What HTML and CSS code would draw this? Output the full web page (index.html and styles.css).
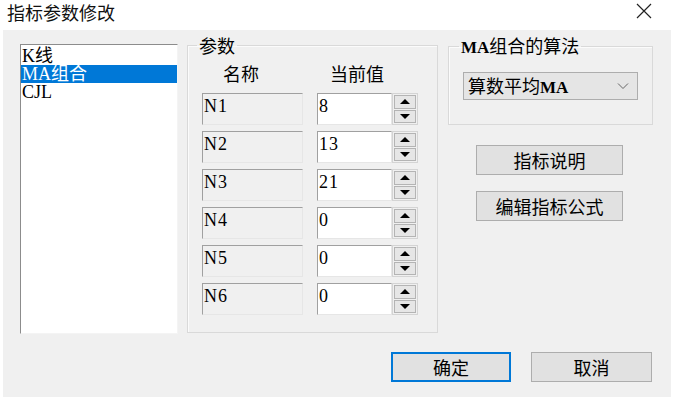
FILE: index.html
```html
<!DOCTYPE html>
<html lang="zh-CN">
  <head>
    <meta charset="UTF-8" />
    <meta name="viewport" content="width=device-width, initial-scale=1.0" />
    <title>指标参数修改</title>
    <link rel="stylesheet" href="styles.css">
  </head>
  <body>
    <div class="titlebar">
      <span class="titlebar__text">指标参数修改</span>
      <svg class="titlebar__close" width="16" height="16" viewBox="0 0 16 16">
        <path d="M1 1L15 15M15 1L1 15" stroke="#222" stroke-width="1.2" fill="none" />
      </svg>
    </div>

    <div class="dialog">
      <div class="dialog-main">
        <ul class="list">
          <li>K线</li>
          <li class="is-selected">MA组合</li>
          <li>CJL</li>
        </ul>

        <fieldset class="group group--params">
          <legend>参数</legend>
          <div class="params-head">
            <span class="params-head__name">名称</span>
            <span class="params-head__value">当前值</span>
          </div>
          <div class="params-rows">
            <div class="param">
              <div class="param__name">N1</div>
              <div class="param__value">8</div>
              <div class="spin"><span class="spin__up"></span><span class="spin__down"></span></div>
            </div>
            <div class="param">
              <div class="param__name">N2</div>
              <div class="param__value">13</div>
              <div class="spin"><span class="spin__up"></span><span class="spin__down"></span></div>
            </div>
            <div class="param">
              <div class="param__name">N3</div>
              <div class="param__value">21</div>
              <div class="spin"><span class="spin__up"></span><span class="spin__down"></span></div>
            </div>
            <div class="param">
              <div class="param__name">N4</div>
              <div class="param__value">0</div>
              <div class="spin"><span class="spin__up"></span><span class="spin__down"></span></div>
            </div>
            <div class="param">
              <div class="param__name">N5</div>
              <div class="param__value">0</div>
              <div class="spin"><span class="spin__up"></span><span class="spin__down"></span></div>
            </div>
            <div class="param">
              <div class="param__name">N6</div>
              <div class="param__value">0</div>
              <div class="spin"><span class="spin__up"></span><span class="spin__down"></span></div>
            </div>
          </div>
        </fieldset>

        <div class="side">
          <fieldset class="group group--algo">
            <legend><span class="latin">MA</span>组合的算法</legend>
            <div class="select">
              <span>算数平均<span class="latin">MA</span></span>
              <svg width="12" height="8" viewBox="0 0 12 8">
                <path d="M1 1.5L6 6.5L11 1.5" stroke="#666" stroke-width="1" fill="none" />
              </svg>
            </div>
          </fieldset>
          <button type="button" class="btn btn--side">指标说明</button>
          <button type="button" class="btn btn--side">编辑指标公式</button>
        </div>
      </div>

      <div class="dialog-actions">
        <button type="button" class="btn btn--primary">确定</button>
        <button type="button" class="btn">取消</button>
      </div>
    </div>
  </body>
</html>
```

FILE: styles.css
```css
* {
  box-sizing: border-box;
}

body {
  margin: 0;
  width: 680px;
  height: 405px;
  background-color: #fff;
  font-family: "Noto Sans CJK SC", sans-serif;
  color: #000;
  overflow: hidden;
}

ul {
  margin: 0;
  padding: 0;
  list-style: none;
}

.latin {
  font-family: "Liberation Serif", serif;
  font-weight: bold;
  font-size: 17px;
}

.titlebar {
  display: flex;
  justify-content: space-between;
  align-items: flex-start;
  height: 30px;
  padding: 0 28px 0 7px;
}

.titlebar__text {
  font-size: 18px;
  line-height: 24px;
  color: #111;
}

.titlebar__close {
  margin-top: 3px;
}

.dialog {
  display: flex;
  flex-direction: column;
  width: 668px;
  height: 367px;
  margin-left: 3px;
  padding: 5px 0 0 17px;
  background-color: #f0f0f0;
}

.dialog-main {
  display: flex;
  align-items: flex-start;
}

.list {
  width: 158px;
  height: 290px;
  margin-top: 9px;
  padding-top: 2px;
  background-color: #fff;
  border: 1px solid;
  border-color: #8c8c8c #f4f4f4 #f4f4f4 #8c8c8c;
  font-family: "Liberation Serif", "Noto Sans CJK SC", serif;
  font-size: 18px;
  line-height: 18px;
}

.list li {
  height: 18px;
  padding-left: 1px;
}

.list li.is-selected {
  background-color: #0078d7;
  color: #fff;
}

.group {
  margin: 0;
  padding: 0;
  border: 1px solid #d9d9d9;
  box-shadow: inset 1px 1px 0 #fbfbfb;
  min-inline-size: 0;
}

.group legend {
  padding: 0 2px;
  font-size: 18px;
  line-height: 20px;
}

.group--params {
  width: 251px;
  height: 298px;
  margin-left: 9px;
}

.group--params legend {
  margin-left: 9px;
}

.params-head {
  display: flex;
  margin-top: 8px;
  padding-left: 14px;
  font-size: 18px;
  line-height: 20px;
}

.params-head__name {
  width: 115px;
  padding-left: 21px;
}

.params-head__value {
  padding-left: 13px;
}

.params-rows {
  display: flex;
  flex-direction: column;
  gap: 6px;
  margin-top: 10px;
  padding-left: 14px;
}

.param {
  display: flex;
  height: 32px;
}

.param__name,
.param__value {
  height: 32px;
  padding: 3px 0 0 1px;
  border: 1px solid;
  border-color: #a0a0a0 #e6e6e6 #e6e6e6 #a0a0a0;
  font-family: "Liberation Serif", serif;
  font-size: 18px;
  line-height: 18px;
}

.param__name {
  width: 101px;
  background-color: #f0f0f0;
  letter-spacing: 1px;
}

.param__value {
  width: 75px;
  margin-left: 14px;
  background-color: #fff;
  letter-spacing: 1px;
}

.spin {
  display: flex;
  flex-direction: column;
  gap: 1px;
  width: 26px;
  height: 32px;
  padding: 1px;
  border: 1px solid #d4d4d4;
  background-color: #f0f0f0;
}

.spin__up,
.spin__down {
  flex: 1;
  display: flex;
  justify-content: center;
  align-items: center;
  border: 1px solid #b4b4b4;
  background-color: #e6e6e6;
}

.spin__up::before,
.spin__down::before {
  content: "";
  border-left: 5px solid transparent;
  border-right: 5px solid transparent;
}

.spin__up::before {
  border-bottom: 5px solid #000;
}

.spin__down::before {
  border-top: 5px solid #000;
}

.side {
  display: flex;
  flex-direction: column;
  margin-left: 10px;
}

.group--algo {
  width: 205px;
  height: 90px;
}

.group--algo legend {
  margin-left: 10px;
}

.select {
  display: flex;
  justify-content: space-between;
  align-items: center;
  width: 175px;
  height: 28px;
  margin: 14px 0 0 14px;
  padding: 0 8px 0 4px;
  background-color: #e5e5e5;
  border: 1px solid #adadad;
  font-size: 18px;
  line-height: 26px;
}

.btn {
  all: unset;
  display: flex;
  justify-content: center;
  align-items: center;
  width: 121px;
  height: 30px;
  background-color: #e1e1e1;
  border: 1px solid #adadad;
  font-family: "Noto Sans CJK SC", sans-serif;
  font-size: 18px;
  line-height: 22px;
  color: #000;
  box-sizing: border-box;
}

.btn--side {
  width: 147px;
  margin-left: 28px;
  margin-top: 16px;
}

.btn--side:first-of-type {
  margin-top: 20px;
}

.dialog-actions {
  display: flex;
  justify-content: flex-end;
  gap: 20px;
  margin-top: 18px;
  margin-right: 19px;
}

.btn--primary {
  width: 120px;
  border: 2px solid #0078d7;
}
```
